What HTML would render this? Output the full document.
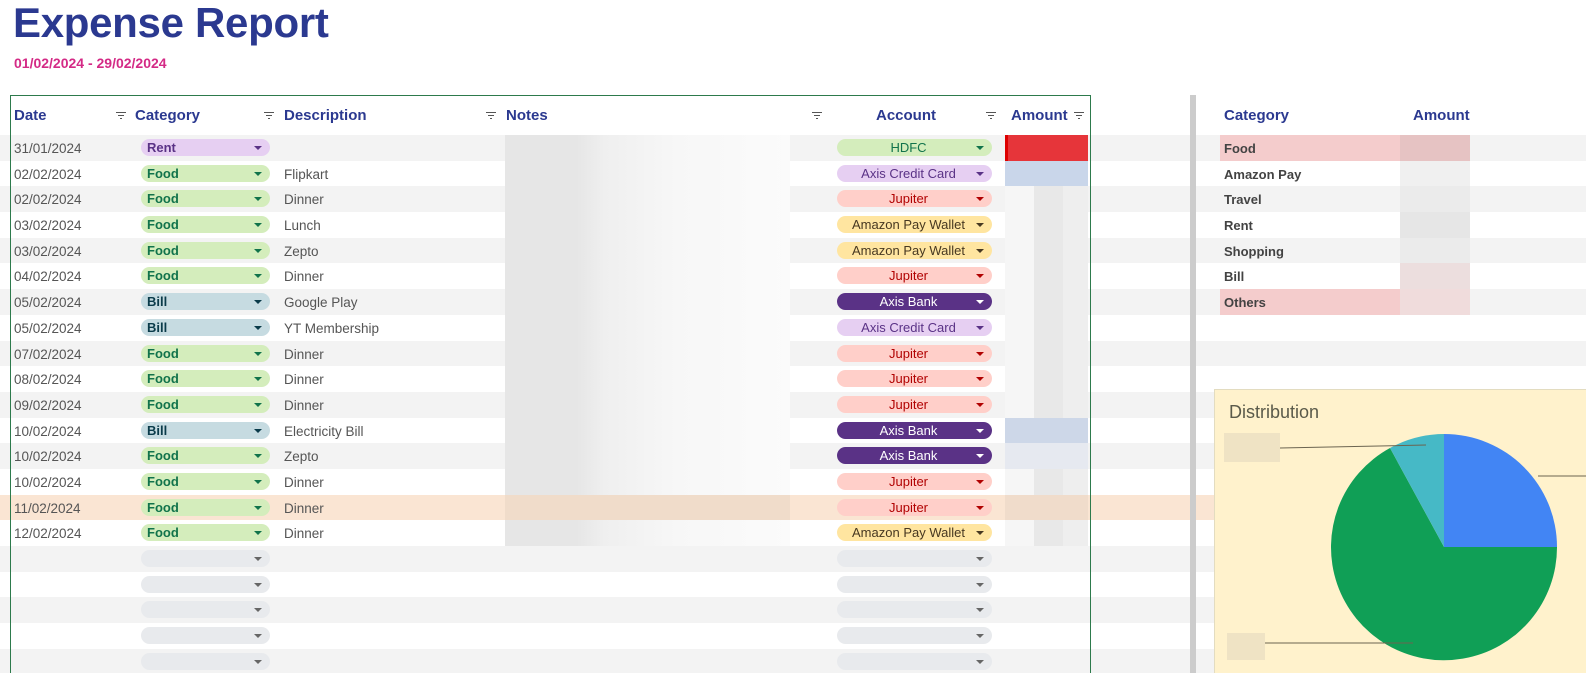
<!DOCTYPE html>
<html style="overflow:hidden;width:1586px;height:673px"><head><meta charset="utf-8"><style>
*{margin:0;padding:0;box-sizing:border-box}
body{width:1586px;height:673px;overflow:hidden;background:#fff;font-family:"Liberation Sans",Arial,sans-serif;position:relative}
.t{position:absolute;left:13px;top:-1px;font-size:42px;font-weight:bold;color:#2b3990;letter-spacing:-0.3px}
.d{position:absolute;left:14px;top:55px;font-size:14px;font-weight:bold;color:#d42a86}
.h{position:absolute;top:107px;font-size:15px;font-weight:bold;color:#2b3990}
.f{position:absolute;top:112px;width:10px;height:8px}
.f i{position:absolute;left:0;height:1px;background:#555}
.rows{position:absolute;left:0;top:135px;width:1586px;height:538px;overflow:hidden}
.r{position:relative;height:25.7px;width:1586px;font-size:13.5px;color:#555}
.r:nth-child(odd){background:#f3f3f3}
.r span{position:absolute;top:6px}
.p{position:absolute;top:4px;height:17px;border-radius:9px;font-size:13px;line-height:17px}
.p:after{content:"";position:absolute;right:8px;top:7px;border-left:4px solid transparent;border-right:4px solid transparent;border-top:4px solid currentColor}
.c{left:141px;width:129px;padding-left:6px;font-weight:bold}
.a{left:837px;width:155px;text-align:center;padding-right:12px}
.rent{background:#e6cff2;color:#5a3286}.food{background:#d4edbc;color:#11734b}.bill{background:#c6dbe1;color:#0a3b4a}
.hdfc{background:#d4edbc;color:#11734b}.acc{background:#e6cff2;color:#5a3286}.jup{background:#ffcfc9;color:#b10202}
.amz{background:#ffe5a0;color:#473821}.axb{background:#5a3286;color:#fff}.emp{background:#e8eaed;color:#666}
.n{position:absolute;left:505px;top:0;width:285px;height:100%;background:linear-gradient(90deg,#e6e6e6 0,#e6e6e6 25%,#efefef 35%,#f7f7f7 60%,#fbfbfb 100%)}
.am{position:absolute;left:1005px;top:0;width:83px;height:100%;background:linear-gradient(90deg,#f6f6f6 0,#f6f6f6 35%,#e8e8e8 35%,#e8e8e8 70%,#eeeeee 70%)}
.rc{position:absolute;left:1224px;top:6px;font-weight:bold;color:#434343;font-size:13px}
</style></head><body>
<div class="t">Expense Report</div>
<div class="d">01/02/2024 - 29/02/2024</div>

<div class="rows">
<div class="r"><span style="left:14px">31/01/2024</span><div class="p c rent">Rent</div><div class="n"></div><div class="p a hdfc">HDFC</div><div class="am" style="background:#e6353a;border-left:3px solid #d00"></div><div class="rc" style="left:1220px;top:0;width:180px;height:25.7px;background:#f4cccc;padding:6px 4px">Food</div><div style="position:absolute;left:1400px;top:0;width:70px;height:25.7px;background:#e6c3c3"></div></div>
<div class="r"><span style="left:14px">02/02/2024</span><div class="p c food">Food</div><span style="left:284px">Flipkart</span><div class="n"></div><div class="p a acc">Axis Credit Card</div><div class="am" style="background:#c9d6ea"></div><div class="rc">Amazon Pay</div><div style="position:absolute;left:1400px;top:0;width:70px;height:100%;background:#f0f0f0"></div></div>
<div class="r"><span style="left:14px">02/02/2024</span><div class="p c food">Food</div><span style="left:284px">Dinner</span><div class="n"></div><div class="p a jup">Jupiter</div><div class="am"></div><div class="rc">Travel</div><div style="position:absolute;left:1400px;top:0;width:70px;height:100%;background:#ebebeb"></div></div>
<div class="r"><span style="left:14px">03/02/2024</span><div class="p c food">Food</div><span style="left:284px">Lunch</span><div class="n"></div><div class="p a amz">Amazon Pay Wallet</div><div class="am"></div><div class="rc">Rent</div><div style="position:absolute;left:1400px;top:0;width:70px;height:100%;background:#e6e6e6"></div></div>
<div class="r"><span style="left:14px">03/02/2024</span><div class="p c food">Food</div><span style="left:284px">Zepto</span><div class="n"></div><div class="p a amz">Amazon Pay Wallet</div><div class="am"></div><div class="rc">Shopping</div><div style="position:absolute;left:1400px;top:0;width:70px;height:100%;background:#ebebeb"></div></div>
<div class="r"><span style="left:14px">04/02/2024</span><div class="p c food">Food</div><span style="left:284px">Dinner</span><div class="n"></div><div class="p a jup">Jupiter</div><div class="am"></div><div class="rc">Bill</div><div style="position:absolute;left:1400px;top:0;width:70px;height:100%;background:#ecdede"></div></div>
<div class="r"><span style="left:14px">05/02/2024</span><div class="p c bill">Bill</div><span style="left:284px">Google Play</span><div class="n"></div><div class="p a axb">Axis Bank</div><div class="am"></div><div class="rc" style="left:1220px;top:0;width:180px;height:25.7px;background:#f4cccc;padding:6px 4px">Others</div><div style="position:absolute;left:1400px;top:0;width:70px;height:100%;background:#f0dcdc"></div></div>
<div class="r"><span style="left:14px">05/02/2024</span><div class="p c bill">Bill</div><span style="left:284px">YT Membership</span><div class="n"></div><div class="p a acc">Axis Credit Card</div><div class="am"></div></div>
<div class="r"><span style="left:14px">07/02/2024</span><div class="p c food">Food</div><span style="left:284px">Dinner</span><div class="n"></div><div class="p a jup">Jupiter</div><div class="am"></div></div>
<div class="r"><span style="left:14px">08/02/2024</span><div class="p c food">Food</div><span style="left:284px">Dinner</span><div class="n"></div><div class="p a jup">Jupiter</div><div class="am"></div></div>
<div class="r"><span style="left:14px">09/02/2024</span><div class="p c food">Food</div><span style="left:284px">Dinner</span><div class="n"></div><div class="p a jup">Jupiter</div><div class="am"></div></div>
<div class="r"><span style="left:14px">10/02/2024</span><div class="p c bill">Bill</div><span style="left:284px">Electricity Bill</span><div class="n"></div><div class="p a axb">Axis Bank</div><div class="am" style="background:#cdd7e8"></div></div>
<div class="r"><span style="left:14px">10/02/2024</span><div class="p c food">Food</div><span style="left:284px">Zepto</span><div class="n"></div><div class="p a axb">Axis Bank</div><div class="am" style="background:#e6e9f0"></div></div>
<div class="r"><span style="left:14px">10/02/2024</span><div class="p c food">Food</div><span style="left:284px">Dinner</span><div class="n"></div><div class="p a jup">Jupiter</div><div class="am"></div></div>
<div class="r" style="background:#fae5d3"><span style="left:14px">11/02/2024</span><div class="p c food">Food</div><span style="left:284px">Dinner</span><div class="n" style="background:#f0dcca"></div><div class="p a jup">Jupiter</div><div class="am" style="background:#f0dccb"></div></div>
<div class="r"><span style="left:14px">12/02/2024</span><div class="p c food">Food</div><span style="left:284px">Dinner</span><div class="n"></div><div class="p a amz">Amazon Pay Wallet</div><div class="am"></div></div>
<div class="r"><div class="p c emp"></div><div class="p a emp"></div></div>
<div class="r"><div class="p c emp"></div><div class="p a emp"></div></div>
<div class="r"><div class="p c emp"></div><div class="p a emp"></div></div>
<div class="r"><div class="p c emp"></div><div class="p a emp"></div></div>
<div class="r"><div class="p c emp"></div><div class="p a emp"></div></div>
</div>

<div class="h" style="left:14px">Date</div>
<div class="h" style="left:135px">Category</div>
<div class="h" style="left:284px">Description</div>
<div class="h" style="left:506px">Notes</div>
<div class="h" style="left:876px">Account</div>
<div class="h" style="left:1011px">Amount</div>
<div class="h" style="left:1224px">Category</div>
<div class="h" style="left:1413px">Amount</div>
<div class="f" style="left:116px"><i style="top:0;width:10px"></i><i style="top:3px;left:2px;width:6px"></i><i style="top:6px;left:4px;width:2px"></i></div>
<div class="f" style="left:264px"><i style="top:0;width:10px"></i><i style="top:3px;left:2px;width:6px"></i><i style="top:6px;left:4px;width:2px"></i></div>
<div class="f" style="left:486px"><i style="top:0;width:10px"></i><i style="top:3px;left:2px;width:6px"></i><i style="top:6px;left:4px;width:2px"></i></div>
<div class="f" style="left:812px"><i style="top:0;width:10px"></i><i style="top:3px;left:2px;width:6px"></i><i style="top:6px;left:4px;width:2px"></i></div>
<div class="f" style="left:986px"><i style="top:0;width:10px"></i><i style="top:3px;left:2px;width:6px"></i><i style="top:6px;left:4px;width:2px"></i></div>
<div class="f" style="left:1074px"><i style="top:0;width:10px"></i><i style="top:3px;left:2px;width:6px"></i><i style="top:6px;left:4px;width:2px"></i></div>

<div style="position:absolute;left:10px;top:95px;width:1081px;height:578px;border:1px solid #2d7a4c;border-bottom:none"></div>
<div style="position:absolute;left:1190px;top:95px;width:6px;height:578px;background:#cccccc"></div>

<div style="position:absolute;left:1214px;top:389px;width:372px;height:284px;background:#fff2cc;border:1px solid #e3dcc0;border-right:none;border-bottom:none"></div>
<div style="position:absolute;left:1229px;top:402px;font-size:18px;color:#5a5a4a">Distribution</div>
<div style="position:absolute;left:1224px;top:433px;width:56px;height:29px;background:#efe3c4"></div>
<div style="position:absolute;left:1227px;top:633px;width:38px;height:27px;background:#efe3c4"></div>
<svg style="position:absolute;left:0;top:0" width="1586" height="673">
<path d="M1444,547 L1444,434 A113,113 0 0 1 1557,547 Z" fill="#4285f4"/>
<path d="M1444,547 L1557,547 A113,113 0 1 1 1390,448 Z" fill="#109f56"/>
<path d="M1444,547 L1390,448 A113,113 0 0 1 1444,434 Z" fill="#46b9c6"/>
<line x1="1280" y1="448" x2="1426" y2="445" stroke="#6b6450"/>
<line x1="1265" y1="643" x2="1413" y2="643" stroke="#6b6450"/>
<line x1="1538" y1="476" x2="1586" y2="476" stroke="#6b6450"/>
</svg>
</body></html>
